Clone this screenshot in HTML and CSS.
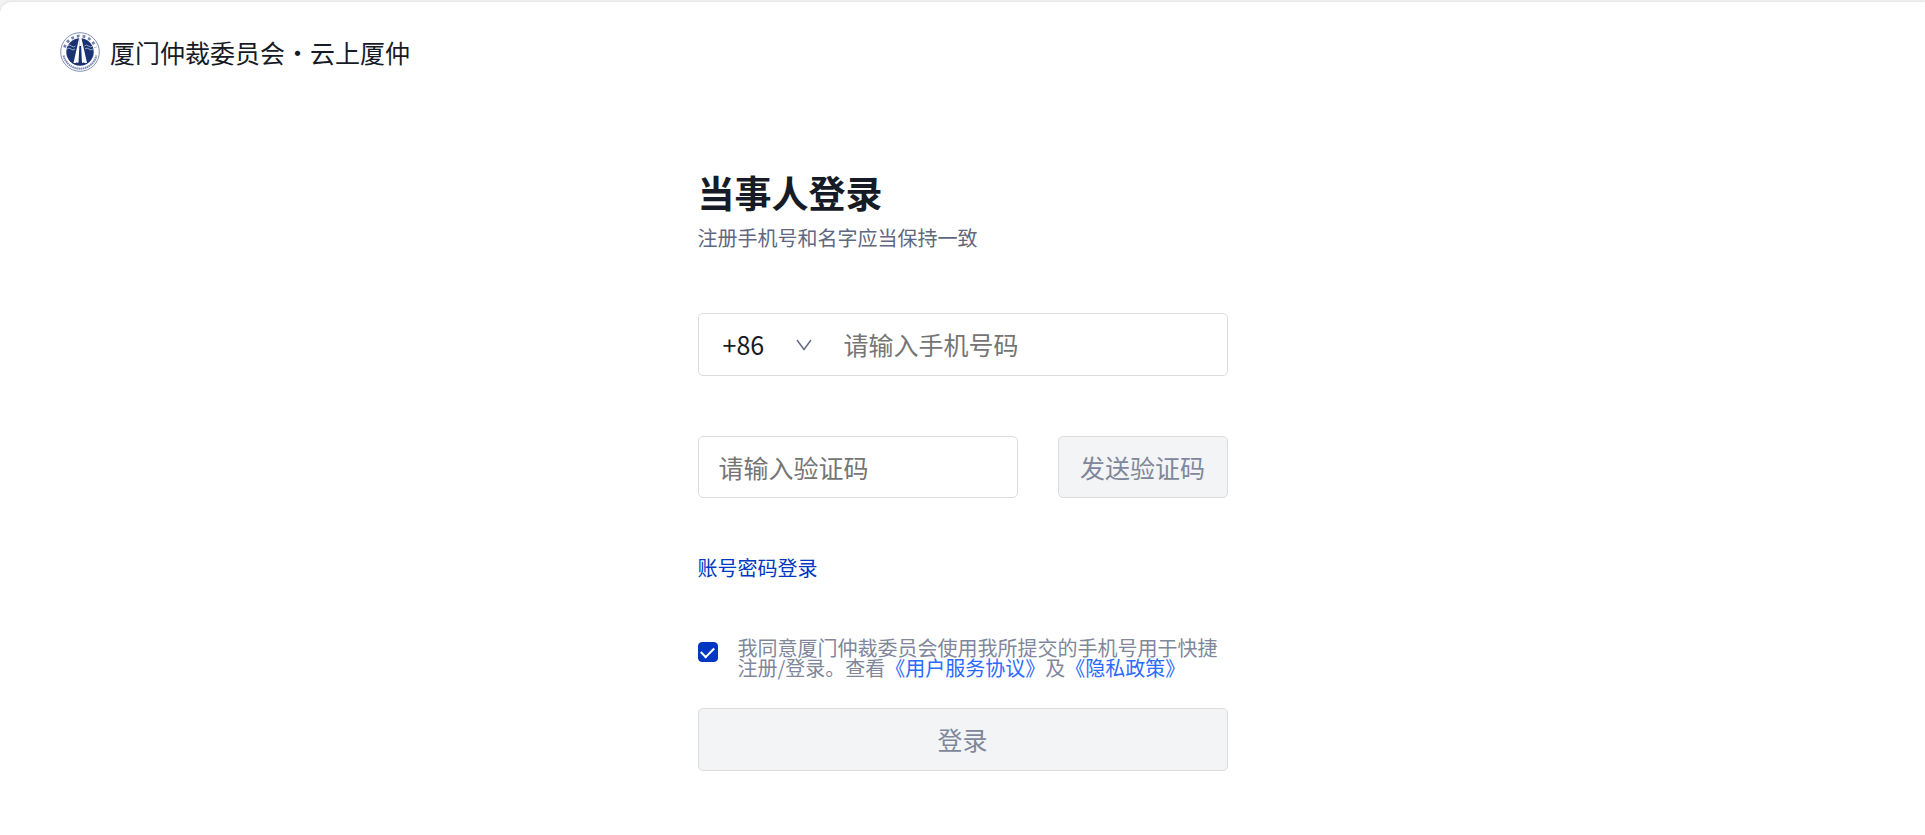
FILE: index.html
```html
<!DOCTYPE html>
<html lang="zh-CN">
<head>
    <meta charset="UTF-8">
    <meta name="viewport" content="width=device-width, initial-scale=1.0">
    <title>厦门仲裁委员会・云上厦仲</title>
    <link rel="stylesheet" href="styles.css">
</head>
<body>
    <div class="page">
        <header class="header">
            <svg class="logo" viewBox="0 0 40 40" aria-hidden="true">
                <circle cx="20" cy="20" r="19.3" fill="#fff" stroke="#8390b4" stroke-width="1"/>
                <!-- lettering rings -->
                <path d="M4.500 15.500A16.200 16.200 0 0 1 35.500 15.500" fill="none" stroke="#7785ad" stroke-width="2.800" stroke-dasharray="2.800 3"/>
                <path d="M3.600 23.500A16.800 16.800 0 0 0 36.400 23.500" fill="none" stroke="#7c8ab0" stroke-width="2" stroke-dasharray="1.600 .5"/>
                <circle cx="20" cy="20" r="13.700" fill="#1a3272"/>
                <!-- waves -->
                <path d="M7.500 14q2-2 4 0t4 0M24.500 14q2-2 4 0t4 0M7 17q2-2 4 0t4 0M25 17q2-2 4 0t4 0" fill="none" stroke="#a9b4d0" stroke-width=".9"/>
                <!-- tower -->
                <path d="M19.300 5L13.500 31H18.500L19.800 5zM20.700 5L22 31H27L21.200 5z" fill="#fff"/>
                <path d="M19.700 4.500H20.800L21.300 14H19.200z" fill="#fff"/>
                <path d="M16 31.200H25" stroke="#1a3272" stroke-width="1.600" stroke-dasharray="1.600 .6"/>
            </svg>
            <span class="site-name">厦门仲裁委员会・云上厦仲</span>
        </header>

        <main class="login">
            <h1>当事人登录</h1>
            <p class="subtitle">注册手机号和名字应当保持一致</p>

            <form id="login-form">
                <div class="field phone">
                    <div class="area-code">
                        <select id="area" aria-label="国家或地区代码">
                            <option>+86</option>
                        </select>
                        <svg class="arrow" viewBox="0 0 16 12" aria-hidden="true">
                            <path d="M1 1L8 10.500L15 1" fill="none" stroke="#606780" stroke-width="1.400"/>
                        </svg>
                    </div>
                    <input type="tel" id="phone" aria-label="手机号码" placeholder="请输入手机号码">
                </div>

                <div class="code-row">
                    <input class="field code" type="text" id="code" aria-label="验证码" placeholder="请输入验证码">
                    <button class="btn send" type="button" disabled>发送验证码</button>
                </div>

                <a class="switch" href="#">账号密码登录</a>

                <div class="agree">
                    <input type="checkbox" id="agree" checked>
                    <p><label for="agree">我同意厦门仲裁委员会使用我所提交的手机号用于快捷注册/登录。查看</label><a href="#">《用户服务协议》</a>及<a href="#">《隐私政策》</a></p>
                </div>

                <button class="btn submit" type="submit" disabled>登录</button>
            </form>
        </main>
    </div>
</body>
</html>
```
FILE: styles.css
```css
* {
    margin: 0;
    padding: 0;
    box-sizing: border-box;
}

body {
    padding-top: 2px;
    background: #f3f3f3;
    color: #171b26;
    font-family: "Noto Sans CJK SC", sans-serif;
}

input, select, button {
    font-family: inherit;
    font-size: 25px;
}

a {
    color: #2b6bff;
    text-decoration: none;
}

.page {
    min-height: calc(100vh - 2px);
    padding: 30px 60px;
    background: #fff;
    border-radius: 12px 0 0 0;
    box-shadow: 0 0 4px rgba(0, 0, 0, 0.1);
}

.header {
    display: flex;
    align-items: center;
    gap: 10px;
    height: 40px;
}

.logo {
    width: 40px;
    height: 40px;
}

.site-name {
    font-size: 25px;
    line-height: 40px;
}

.login {
    max-width: 530px;
    margin: 95px auto 0;
}

h1 {
    font-size: 37px;
    line-height: 50px;
}

.subtitle {
    margin-top: 6px;
    color: #606780;
    font-size: 20px;
    line-height: 30px;
}

.field {
    width: 100%;
    background: #fff;
    border: 1px solid #dcdcdc;
    border-radius: 5px;
}

.phone {
    display: flex;
    height: 63px;
    margin-top: 60px;
}

.area-code {
    display: flex;
    align-items: center;
    width: 125px;
    padding-left: 24px;
}

.area-code select {
    width: 73px;
    height: 100%;
    padding-bottom: 2px;
    border: none;
    background: none;
    color: #171b26;
    appearance: none;
}

.arrow {
    width: 16px;
    height: 12px;
}

.phone input {
    flex: 1;
    min-width: 0;
    padding: 0 20px 2px;
    border: none;
    background: none;
}

.field:focus-within,
.code:focus {
    border-color: #0037c2;
    outline: none;
}

.code-row {
    display: flex;
    gap: 40px;
    height: 62px;
    margin-top: 60px;
}

.code {
    flex: 1;
    min-width: 0;
    padding: 0 20px;
}

.btn {
    background: #f3f4f6;
    border: 1px solid #dcdcdc;
    border-radius: 5px;
    color: #80879b;
}

.send {
    width: 170px;
}

.switch {
    display: block;
    width: fit-content;
    margin-top: 55px;
    color: #0037c2;
    font-size: 20px;
    line-height: 30px;
}

.agree {
    display: flex;
    align-items: flex-start;
    gap: 20px;
    margin-top: 55px;
    color: #80879b;
    font-size: 20px;
    line-height: 20px;
}

.agree input {
    flex: none;
    width: 20px;
    height: 20px;
    margin-top: 4px;
    appearance: none;
    border-radius: 4px;
    border: 1px solid #dcdcdc;
}

/* tick */
.agree input:checked {
    display: grid;
    place-items: center;
    background: #0037c2;
    border-color: #0037c2;
}

.agree input:checked::before {
    content: "";
    width: 11px;
    height: 6px;
    margin-bottom: 3px;
    border-left: 2px solid #fff;
    border-bottom: 2px solid #fff;
    transform: rotate(-45deg);
}

.submit {
    width: 100%;
    height: 63px;
    margin-top: 30px;
    padding-bottom: 2px;
}
```
